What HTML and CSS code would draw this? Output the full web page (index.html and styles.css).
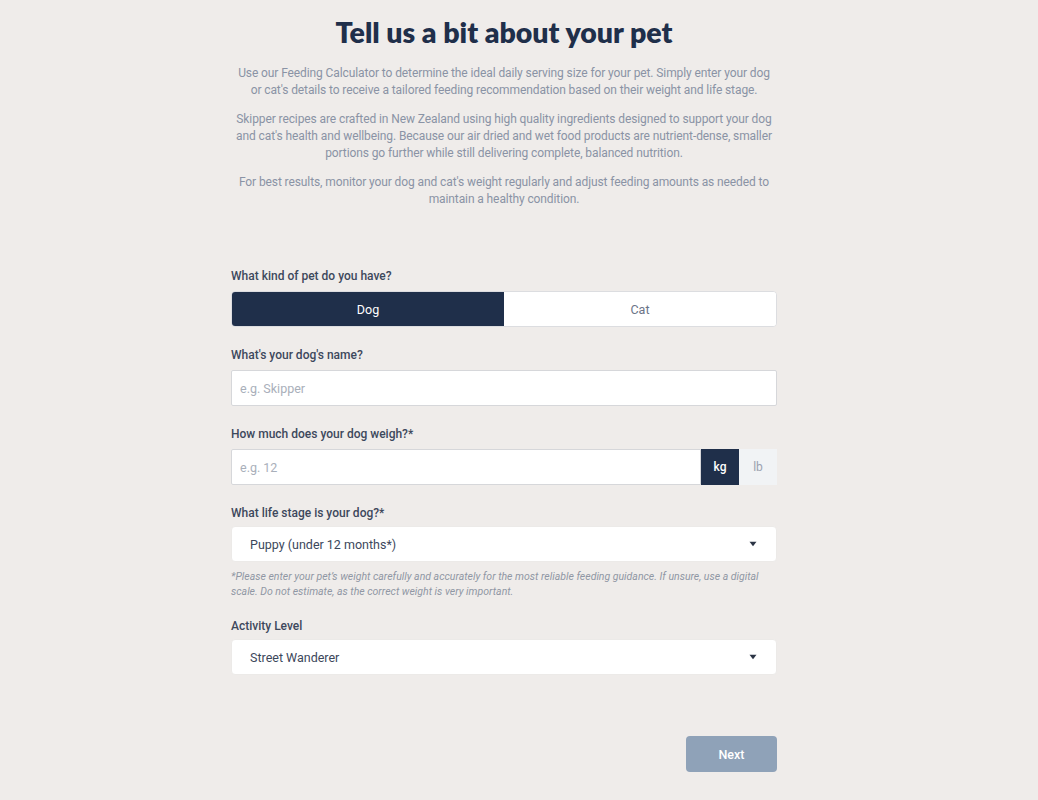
FILE: index.html
```html
<!DOCTYPE html>
<html lang="en">
<head>
<meta charset="utf-8">
<title>Feeding Calculator</title>
<link rel="stylesheet" href="styles.css">
</head>
<body>
<main class="page">
  <header class="intro">
    <h1 class="title">Tell us a bit about your pet</h1>
    <p>Use our Feeding Calculator to determine the ideal daily serving size for your pet. Simply enter your dog or cat's details to receive a tailored feeding recommendation based on their weight and life stage.</p>
    <p>Skipper recipes are crafted in New Zealand using high quality ingredients designed to support your dog and cat's health and wellbeing. Because our air dried and wet food products are nutrient-dense, smaller portions go further while still delivering complete, balanced nutrition.</p>
    <p>For best results, monitor your dog and cat's weight regularly and adjust feeding amounts as needed to maintain a healthy condition.</p>
  </header>

  <form class="form">
    <div class="field">
      <label class="label">What kind of pet do you have?</label>
      <div class="toggle">
        <button type="button" class="toggle-btn active">Dog</button>
        <button type="button" class="toggle-btn">Cat</button>
      </div>
    </div>

    <div class="field">
      <label class="label">What's your dog's name?</label>
      <input class="input" type="text" placeholder="e.g. Skipper">
    </div>

    <div class="field">
      <label class="label">How much does your dog weigh?*</label>
      <div class="weight">
        <input class="input weight-input" type="text" placeholder="e.g. 12">
        <button type="button" class="unit active">kg</button>
        <button type="button" class="unit">lb</button>
      </div>
    </div>

    <div class="field field-hint">
      <label class="label label-select">What life stage is your dog?*</label>
      <div class="select">
        <span>Puppy (under 12 months*)</span>
        <svg class="caret" width="10" height="6" viewBox="0 0 10 6"><path d="M1.5 0.8h7L5 5.2z" fill="#2b3445"/></svg>
      </div>
      <p class="hint">*Please enter your pet’s weight carefully and accurately for the most reliable feeding guidance. If unsure, use a digital scale. Do not estimate, as the correct weight is very important.</p>
    </div>

    <div class="field">
      <label class="label label-select">Activity Level</label>
      <div class="select">
        <span>Street Wanderer</span>
        <svg class="caret" width="10" height="6" viewBox="0 0 10 6"><path d="M1.5 0.8h7L5 5.2z" fill="#2b3445"/></svg>
      </div>
    </div>

    <div class="actions">
      <button type="button" class="next">Next</button>
    </div>
  </form>
</main>
</body>
</html>
```
FILE: styles.css
```css
* { box-sizing: border-box; }
html, body { margin: 0; padding: 0; }
body {
  background: #efecea;
  font-family: Roboto, "Liberation Sans", sans-serif;
  color: #1f2f4a;
}
.page {
  display: flex;
  flex-direction: column;
  align-items: center;
  padding: 14px 30px 0 0;
}
.intro {
  width: 546px;
  text-align: center;
}
.title {
  font-family: Lato, "Open Sans", sans-serif;
  font-weight: 800;
  font-size: 28.5px;
  line-height: 36px;
  margin: 0 0 15px;
  color: #1f2f4a;
}
.intro p {
  margin: 0 3px 12px;
  font-size: 12px;
  letter-spacing: -0.1px;
  line-height: 17px;
  color: #8a93a5;
}
.form {
  width: 546px;
  margin-top: 48px;
  display: flex;
  flex-direction: column;
}
.field { display: flex; flex-direction: column; margin-bottom: 20px; }
.field-hint { margin-bottom: 19px; }
.label {
  font-size: 12px;
  font-weight: 500;
  color: #3d485c;
  line-height: 16px;
  margin-bottom: 7px;
}
.label-select { margin-bottom: 5px; }
.toggle {
  display: flex;
  height: 36px;
  border: 1px solid #dcdde0;
  border-radius: 4px;
  overflow: hidden;
  background: #fff;
}
.toggle-btn {
  flex: 1;
  border: 0;
  background: #fff;
  font-family: inherit;
  font-size: 12.5px;
  color: #6b7487;
}
.toggle-btn.active { background: #1f2f4a; color: #fff; }
.input {
  height: 36px;
  border: 1px solid #d6d7da;
  border-radius: 2px;
  background: #fff;
  padding: 0 8px;
  font-family: inherit;
  font-size: 12.5px;
  color: #1f2f4a;
  outline: none;
}
.input::placeholder { color: #a9afba; }
.weight { display: flex; height: 36px; }
.weight-input { flex: 1; height: 36px; border-radius: 2px 0 0 2px; }
.unit {
  width: 38px;
  border: 0;
  font-family: inherit;
  font-size: 12px;
  background: #f1f3f5;
  color: #9aa2b0;
}
.unit.active { background: #1f2f4a; color: #fff; font-weight: 500; }
.select {
  height: 36px;
  background: #fff;
  border-radius: 4px;
  border: 1px solid #eceae8;
  display: flex;
  align-items: center;
  justify-content: space-between;
  padding: 0 18px;
  font-size: 12.5px;
  color: #3c475b;
}
.caret { flex: none; }
.hint {
  margin: 7px 0 0;
  font-size: 10.5px;
  line-height: 15px;
  font-style: italic;
  color: #9097a4;
}
.actions {
  display: flex;
  justify-content: flex-end;
  margin-top: 41px;
}
.next {
  width: 91px;
  height: 36px;
  border: 0;
  border-radius: 4px;
  background: #8fa2b8;
  color: #fff;
  font-family: inherit;
  font-size: 12.5px;
  font-weight: 500;
}
```
